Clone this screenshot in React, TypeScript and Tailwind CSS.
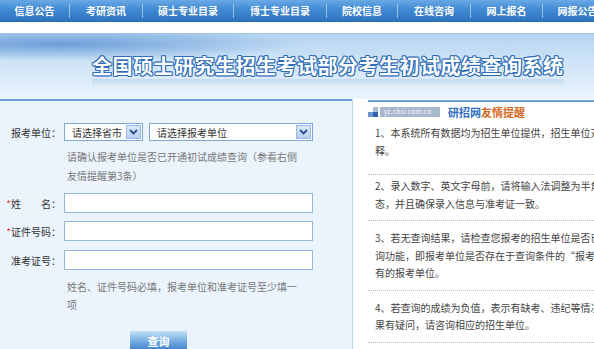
const navItems = [
  { label: "信息公告", w: "w-[69px]" },
  { label: "考研资讯", w: "w-[73px]" },
  { label: "硕士专业目录", w: "w-[91px]" },
  { label: "博士专业目录", w: "w-[93px]" },
  { label: "院校信息", w: "w-[71px]" },
  { label: "在线咨询", w: "w-[73px]" },
  { label: "网上报名", w: "w-[72px]" },
  { label: "网报公告", w: "w-[70px]" },
];

const tips = [
  {
    pad: "pt-[2px] pb-[15px]",
    lines: ["1、本系统所有数据均为招生单位提供，招生单位对数据拥有最终解", "释。"],
  },
  {
    pad: "pt-[2px] pb-[8px]",
    lines: ["2、录入数字、英文字母前，请将输入法调整为半角状", "态，并且确保录入信息与准考证一致。"],
  },
  {
    pad: "pt-[8px] pb-[8px]",
    lines: [
      "3、若无查询结果，请检查您报考的招生单位是否已开通查",
      "询功能，即报考单位是否存在于查询条件的“报考单位”中所",
      "有的报考单位。",
    ],
  },
  {
    pad: "pt-[8px] pb-[8px]",
    lines: ["4、若查询的成绩为负值，表示有缺考、违纪等情况。如", "果有疑问，请咨询相应的招生单位。"],
  },
];

function Arrow() {
  return (
    <span className="mr-px w-[15px] h-[14px] flex items-center justify-center bg-[linear-gradient(180deg,#dbe8f8,#b9d0ef)] border border-[#9bb9e0]">
      <svg width="9" height="6" viewBox="0 0 9 6">
        <path d="M1 1 L4.5 4.5 L8 1" fill="none" stroke="#2b4f8c" strokeWidth="1.8" />
      </svg>
    </span>
  );
}

function Input() {
  return <div className="ml-[3px] w-[249px] h-[20px] border border-[#93b8de] bg-white" />;
}

export default function App() {
  return (
    <div className="w-[594px] h-[349px] overflow-hidden bg-white text-[#333] font-['Noto_Sans_CJK_SC','Noto_Sans',sans-serif]">
      {/* nav */}
      <nav className="flex h-[22px] border-b border-[#2a66aa] bg-[linear-gradient(180deg,#6aa9e6_0%,#428ad3_45%,#2f74c0_100%)]">
        {navItems.map((n, i) => (
          <div key={n.label} className={`${n.w} shrink-0 flex items-center`}>
            {i > 0 && <span className="w-px h-[14px] bg-[#9cc6ee]" />}
            <span className="flex-1 text-center text-[10px] font-bold leading-none text-white whitespace-nowrap">
              {n.label}
            </span>
          </div>
        ))}
      </nav>
      <div className="h-[12px] border-b border-[#a6c6e6] bg-white" />

      {/* banner */}
      <div className="h-[65px] overflow-hidden bg-[radial-gradient(ellipse_240px_17px_at_60px_10px,rgba(95,148,212,0.85),transparent),linear-gradient(180deg,#b5d4f1_0%,#cfe4f7_45%,#ebf4fd_100%)]">
        <div className="pl-[92px] pt-[20px]">
          <div className="text-[20px] font-bold leading-[24px] tracking-[0.5px] text-white whitespace-nowrap [text-shadow:1px_0_#2f6db6,-1px_0_#2f6db6,0_1px_#2f6db6,0_-1px_#2f6db6,1px_1px_#2f6db6,-1px_-1px_#2f6db6,1px_-1px_#2f6db6,-1px_1px_#2f6db6]">
            全国硕士研究生招生考试部分考生初试成绩查询系统
          </div>
          <div className="mt-[1px] h-[8px] w-[472px] bg-[linear-gradient(180deg,rgba(150,185,225,0.35),transparent)]" />
        </div>
      </div>

      <div className="flex h-[250px]">
        {/* query form */}
        <div className="w-[352px] shrink-0 border-t-2 border-[#6b9fd6] bg-[#ebf4fd] pt-[22px] text-[10px]">
          <div className="flex items-center h-[18px]">
            <span className="w-[61px] text-right">报考单位：</span>
            <div className="ml-[3px] w-[79px] h-[18px] flex items-center justify-between border border-[#7fa8d8] bg-white pl-[7px]">
              <span>请选择省市</span>
              <Arrow />
            </div>
            <div className="ml-[6px] w-[164px] h-[18px] flex items-center justify-between border border-[#7fa8d8] bg-white pl-[7px]">
              <span>请选择报考单位</span>
              <Arrow />
            </div>
          </div>
          <p className="mt-[6px] pl-[67px] leading-[19px] text-[#777] whitespace-nowrap">
            请确认报考单位是否已开通初试成绩查询（参看右侧
            <br />
            友情提醒第3条）
          </p>
          <div className="mt-[8px] flex items-center">
            <span className="w-[61px] text-right whitespace-nowrap">
              <span className="text-[#e53935]">*</span>姓　　名：
            </span>
            <Input />
          </div>
          <div className="mt-[8px] flex items-center">
            <span className="w-[61px] text-right whitespace-nowrap">
              <span className="text-[#e53935]">*</span>证件号码：
            </span>
            <Input />
          </div>
          <div className="mt-[9px] flex items-center">
            <span className="w-[61px] text-right whitespace-nowrap">准考证号：</span>
            <Input />
          </div>
          <p className="mt-[8px] pl-[67px] leading-[18px] text-[#777] whitespace-nowrap">
            姓名、证件号码必填，报考单位和准考证号至少填一
            <br />
            项
          </p>
          <button className="mt-[17px] ml-[130px] w-[57px] h-[20px] bg-[linear-gradient(180deg,#c4e2f8_0%,#7cb2e4_45%,#3a7ccb_100%)] text-[11px] font-bold text-white leading-none">
            查询
          </button>
        </div>

        {/* tips */}
        <div className="flex-1 border-l border-[#c3d8ee] bg-white pl-[15px] pt-px">
          <div className="w-[240px] border-t-2 border-[#6b9fd6]">
            <div className="h-[20px] flex items-center">
              <svg width="12" height="10" viewBox="0 0 12 10">
                <rect x="0" y="5" width="5" height="5" fill="#6d96cc" />
                <rect x="5" y="0" width="5" height="5" fill="#a9bbd0" />
                <rect x="5" y="5" width="5" height="5" fill="#2f64ad" />
              </svg>
              <span className="w-[60px] h-[10px] bg-[#a8b9cd] text-[6px] leading-[10px] text-white pl-[4px] tracking-[0.5px]">
                yz.chsi.com.cn
              </span>
              <span className="ml-[8px] text-[11px] font-bold leading-none text-[#2f6fc0]">研招网</span>
              <span className="text-[11px] font-bold leading-none text-[#d2691e]">友情提醒</span>
            </div>
            {tips.map((t) => (
              <div key={t.lines[0]} className={`${t.pad} pl-[7px] border-b border-dotted border-[#bbb]`}>
                {t.lines.map((l) => (
                  <div key={l} className="text-[10px] leading-[17.5px] text-[#444] whitespace-nowrap">
                    {l}
                  </div>
                ))}
              </div>
            ))}
          </div>
        </div>
      </div>
    </div>
  );
}
